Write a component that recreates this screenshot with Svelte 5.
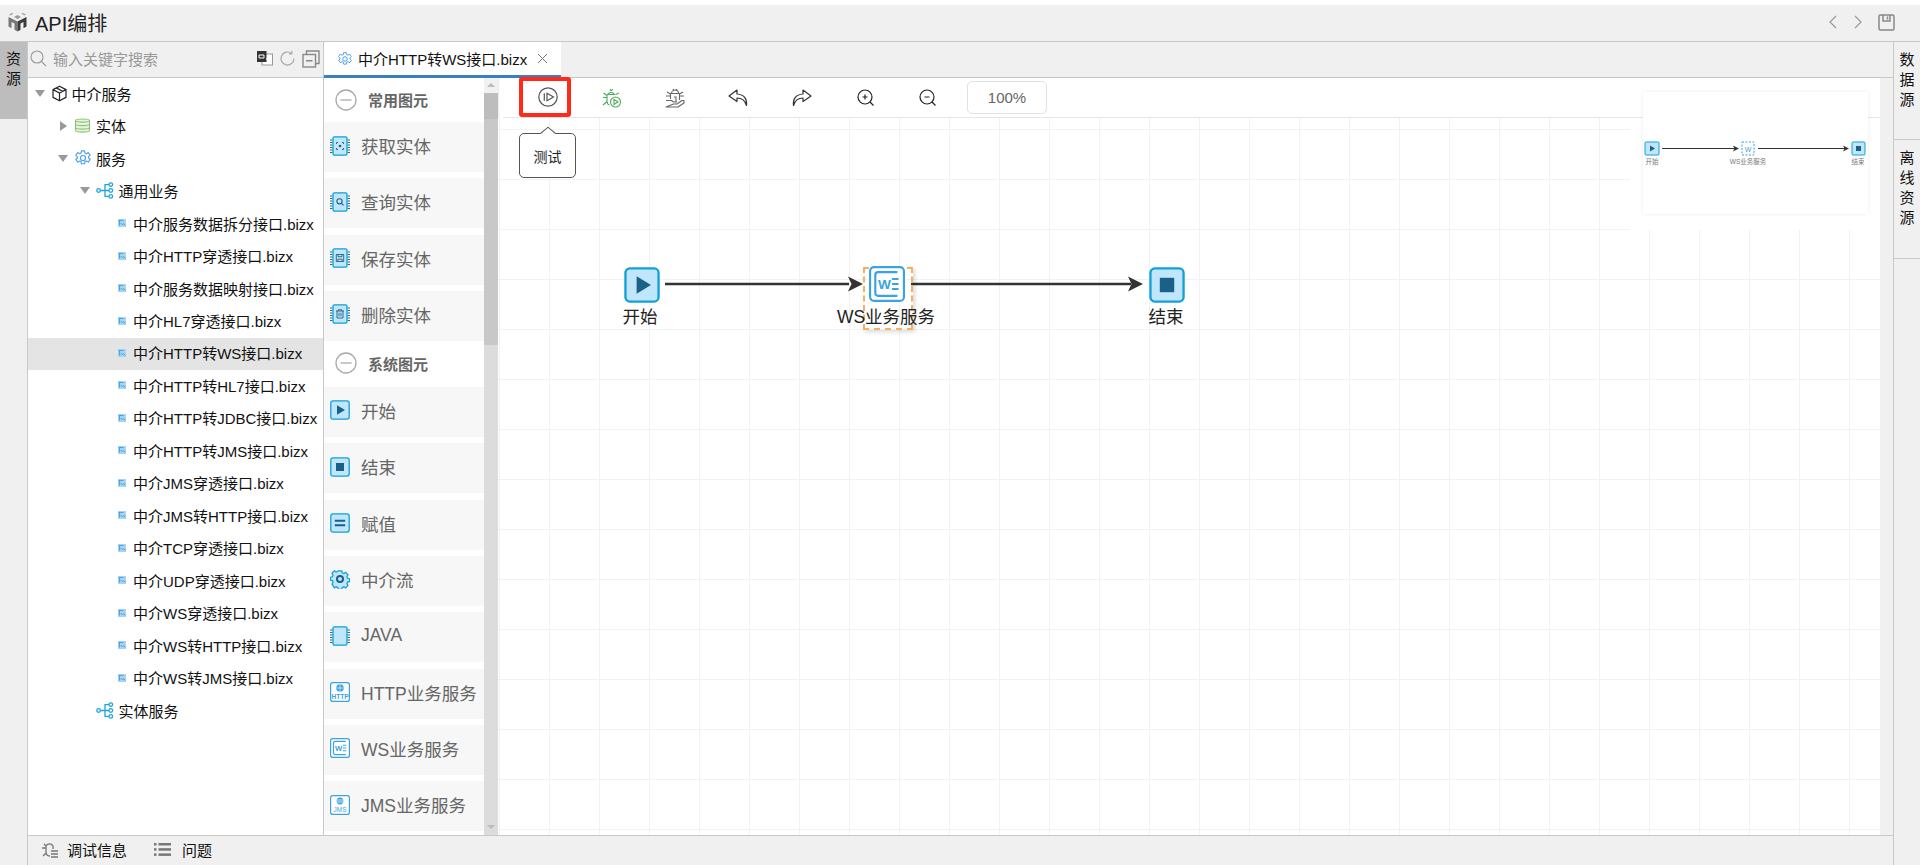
<script lang="ts">
  type Row = { label: string; level: number; icon?: string; open?: boolean; selected?: boolean };

  const leaves = [
    '中介服务数据拆分接口.bizx',
    '中介HTTP穿透接口.bizx',
    '中介服务数据映射接口.bizx',
    '中介HL7穿透接口.bizx',
    '中介HTTP转WS接口.bizx',
    '中介HTTP转HL7接口.bizx',
    '中介HTTP转JDBC接口.bizx',
    '中介HTTP转JMS接口.bizx',
    '中介JMS穿透接口.bizx',
    '中介JMS转HTTP接口.bizx',
    '中介TCP穿透接口.bizx',
    '中介UDP穿透接口.bizx',
    '中介WS穿透接口.bizx',
    '中介WS转HTTP接口.bizx',
    '中介WS转JMS接口.bizx'
  ];

  const rows: Row[] = [
    { label: '中介服务', level: 0, icon: 'box', open: true },
    { label: '实体', level: 1, icon: 'db', open: false },
    { label: '服务', level: 1, icon: 'gear', open: true },
    { label: '通用业务', level: 2, icon: 'flow', open: true },
    ...leaves.map((label, i) => ({ label, level: 3, icon: 'leaf', selected: i === 4 })),
    { label: '实体服务', level: 2, icon: 'flow' }
  ];

  const commonItems = [
    { label: '获取实体', icon: 'chip-get' },
    { label: '查询实体', icon: 'chip-query' },
    { label: '保存实体', icon: 'chip-save' },
    { label: '删除实体', icon: 'chip-del' }
  ];

  const systemItems = [
    { label: '开始', icon: 'start' },
    { label: '结束', icon: 'stop' },
    { label: '赋值', icon: 'assign' },
    { label: '中介流', icon: 'flowgear' },
    { label: 'JAVA', icon: 'chip' },
    { label: 'HTTP业务服务', icon: 'http' },
    { label: 'WS业务服务', icon: 'ws' },
    { label: 'JMS业务服务', icon: 'jms' }
  ];
</script>

{#snippet gearIcon(size, color)}
  <svg width={size} height={size} viewBox="0 0 24 24" fill="none" stroke={color} stroke-width="1.5" aria-hidden="true">
    <path d="M10 2.5h4l.6 2.9 1.7.8 2.6-1.4 2.6 3.4-2 2 .1 1.8 2 2-2.6 3.400-2.600-1.400-1.800.8-.6 2.900h-4l-.6-2.900-1.700-.8-2.600 1.400-2.600-3.400 2-2-.1-1.800-2-2 2.600-3.400 2.600 1.400 1.800-.8z" stroke-linejoin="round" />
    <circle cx="12" cy="12" r="3.4" />
  </svg>
{/snippet}

{#snippet treeIcon(kind)}
  {#if kind === 'box'}
    <svg width="17" height="17" viewBox="0 0 17 17" fill="none" stroke="#222" stroke-width="1.2" stroke-linejoin="round" aria-hidden="true">
      <path d="M8.5 1.2 15 4.6v7.8l-6.500 3.400L2 12.400V4.600zM2 4.600l6.500 3.400L15 4.600M8.500 8v7.800M5.200 2.900l6.500 3.400" />
    </svg>
  {:else if kind === 'db'}
    <svg width="17" height="17" viewBox="0 0 17 17" fill="#e6f3df" stroke="#8cc472" stroke-width="1.1" aria-hidden="true">
      <path d="M1.5 3.5C1.5 1.4 15.5 1.4 15.5 3.5v10c0 2.100-14 2.100-14 0z" />
      <path d="M1.5 3.5c0 2.100 14 2.100 14 0M1.500 7c0 2.100 14 2.100 14 0M1.500 10.500c0 2.100 14 2.100 14 0" fill="none" />
    </svg>
  {:else if kind === 'gear'}
    {@render gearIcon(18, '#4a9ff0')}
  {:else if kind === 'flow'}
    <svg width="18" height="17" viewBox="0 0 18 17" fill="none" stroke="#1ea5dc" stroke-width="1.3" aria-hidden="true">
      <circle cx="2.6" cy="8.5" r="1.8" />
      <circle cx="14.8" cy="2.6" r="1.8" />
      <circle cx="14.8" cy="8.5" r="1.8" />
      <circle cx="14.8" cy="14.4" r="1.8" />
      <path d="M4.4 8.5H13M13 2.6H9v11.800h4" />
    </svg>
  {:else}
    <svg width="8" height="8" viewBox="0 0 8 8" aria-hidden="true">
      <rect width="8" height="8" fill="#a6d4f2" />
      <path d="M.5 1.500h5M1.500 1.500v5M2.500 4l2 2 1-1.500 2 2" stroke="#4fa3dc" stroke-width="1" fill="none" />
    </svg>
  {/if}
{/snippet}

{#snippet tile(kind, size)}
  <svg width={size} height={size} viewBox="0 0 20 20" aria-hidden="true">
    {#if kind === 'flowgear'}
      <path d="M8 1h4l.5 2.300 1.700.7 2-1.200 2.700 2.800-1.200 2 .7 1.700 2.100.5v3.300l-2.100.5-.7 1.700 1.200 2-2.700 2.700-2-1.200-1.700.7-.5 2.100H8l-.5-2.100-1.700-.7-2 1.200L1.100 15.600l1.200-2-.7-1.700-2.100-.5V8.100l2.100-.5.7-1.700-1.200-2 2.700-2.800 2 1.200 1.700-.7z" transform="translate(1 .9) scale(.9)" fill="#bfe6fb" stroke="#12a0d8" stroke-width="1.400" />
      <circle cx="10" cy="10" r="3" fill="none" stroke="#1a6088" stroke-width="2" />
    {:else if kind === 'http' || kind === 'ws' || kind === 'jms'}
      <rect x=".6" y=".6" width="18.800" height="18.800" rx="2.200" fill="#fff" stroke="#3ca3e2" stroke-width="1.200" />
      {#if kind === 'ws'}
        <path d="M15.800 3.400H5a1.500 1.500 0 0 0-1.500 1.500v10.200A1.500 1.500 0 0 0 5 16.600h10.800" fill="none" stroke="#3ca3e2" stroke-width="1.200" />
        <text x="5" y="12.800" font-size="7.600" font-weight="700" fill="#3ca3e2" font-family="Liberation Sans, sans-serif">W</text>
        <path d="M12.800 7.200h3.600M12.800 10h3.600M12.800 12.800h3.600" stroke="#3ca3e2" stroke-width="1.100" />
      {:else if kind === 'http'}
        <circle cx="10" cy="6" r="3.800" fill="#3ca3e2" />
        <path d="M6.200 6h7.600M10 2.200v7.600" stroke="#fff" stroke-width=".6" />
        <text x="10" y="17.300" text-anchor="middle" font-size="6.600" font-weight="700" fill="#3ca3e2" font-family="Liberation Sans, sans-serif">HTTP</text>
      {:else}
        <circle cx="10" cy="6" r="3.400" fill="#3ca3e2" />
        <path d="M6.600 5h6.800M6.600 7h6.800" stroke="#fff" stroke-width=".7" />
        <text x="10" y="17" text-anchor="middle" font-size="6.400" fill="#3ca3e2" font-family="Liberation Sans, sans-serif">JMS</text>
      {/if}
    {:else if kind.startsWith('chip')}
      <path d="M0 4h2.500M0 6.500h2.500M0 9h2.500M0 11.500h2.500M0 14h2.500M0 16.500h2.500M17.500 4H20M17.500 6.500H20M17.500 9H20M17.500 11.500H20M17.500 14H20M17.500 16.500H20" stroke="#24708f" stroke-width="1.200" />
      <rect x="3" y=".8" width="14" height="18.400" rx="1.600" fill="#bfe6fb" stroke="#12a0d8" stroke-width="1.300" />
      {#if kind === 'chip-get'}
        <path d="M6.500 8V6.500H8M12 6.500h1.500V8M13.500 12v1.500H12M8 13.500H6.500V12" fill="none" stroke="#24607f" stroke-width=".9" />
        <circle cx="10" cy="10" r="1.300" fill="#24607f" />
      {:else if kind === 'chip-query'}
        <circle cx="9.500" cy="9.300" r="2.600" fill="none" stroke="#24607f" stroke-width="1.100" />
        <path d="m11.500 11.300 2 2" stroke="#24607f" stroke-width="1.200" />
      {:else if kind === 'chip-save'}
        <path d="M6.300 6.500h7.400v7H6.300zM8 6.500v2.200h4V6.500M7.800 13.500v-2.300h4.400v2.300" fill="none" stroke="#24607f" stroke-width=".9" />
      {:else if kind === 'chip-del'}
        <path d="M6 7h8M8.200 7V5.800h3.600V7M7 7v7h6V7M9 8.700v3.600M11 8.700v3.600" fill="none" stroke="#24607f" stroke-width=".9" />
      {/if}
    {:else}
      <rect x=".8" y=".8" width="18.400" height="18.400" rx="2.400" fill="#bfe6fb" stroke="#12a0d8" stroke-width="1.300" />
      {#if kind === 'start'}
        <path d="M7 5.200 15 10l-8 4.800z" fill="#1a6088" />
      {:else if kind === 'stop'}
        <rect x="6" y="6" width="8" height="8" fill="#1a6088" />
      {:else if kind === 'assign'}
        <path d="M4.800 7.700h10.400M4.800 12.300h10.400" stroke="#1a6088" stroke-width="2" />
      {/if}
    {/if}
  </svg>
{/snippet}

{#snippet collapseHead(label)}
  <div class="group-head">
    <svg width="22" height="22" viewBox="0 0 22 22" fill="none" stroke="#aaa" stroke-width="1.300" aria-hidden="true">
      <circle cx="11" cy="11" r="10" />
      <path d="M5.500 11h11" />
    </svg>
    <span>{label}</span>
  </div>
{/snippet}

{#snippet paletteItem(item)}
  <div class="palette-item">
    {@render tile(item.icon, 20)}
    <span>{item.label}</span>
  </div>
{/snippet}

<div class="page">
  <header class="titlebar">
    <svg class="logo" width="21" height="20" viewBox="0 0 21 20" aria-hidden="true">
      <path d="m10.500 9.500-9-4.500v9.500l3 1.700V10l3 1.600v6.100l3 1.800z" fill="#777" />
      <path d="m10.500 9.500 9-4.500v9.500l-3 1.700V10l-3 1.600v6.100l-3 1.800z" fill="#3c3c3c" />
      <path d="m10.500 3 3.500 2-3.500 2L7 5z" fill="#999" />
      <path d="M2 2.500 5 .8l1.500.9-3 1.700zM19 2.500 16 .8l-1.500.9 3 1.700z" fill="#aaa" />
    </svg>
    <h1>API编排</h1>
    <div class="titlebar-actions">
      <svg width="10" height="14" viewBox="0 0 10 14" fill="none" stroke="#999" stroke-width="1.200"><path d="M8 1 2 7l6 6" /></svg>
      <svg width="10" height="14" viewBox="0 0 10 14" fill="none" stroke="#999" stroke-width="1.200"><path d="m2 1 6 6-6 6" /></svg>
      <svg width="17" height="17" viewBox="0 0 17 17" fill="none" stroke="#888" stroke-width="1.500"><rect x="1" y="1" width="15" height="15" rx="1.500" /><path d="M5 1v6h7V1M9.500 2.500v3" /></svg>
    </div>
  </header>

  <div class="workspace">
    <nav class="left-rail">
      <div class="rail-tab active">资<br />源</div>
    </nav>

    <div class="center">
      <div class="panels">
        <aside class="sidebar">
          <div class="search">
            <svg width="17" height="17" viewBox="0 0 17 17" fill="none" stroke="#999" stroke-width="1.100"><circle cx="7" cy="7" r="6" /><path d="m11.500 11.500 4.500 4.500" /></svg>
            <span class="placeholder">输入关键字搜索</span>
            <div class="search-tools">
              <svg width="16" height="15" viewBox="0 0 16 15" aria-hidden="true">
                <rect x="5" y="3" width="10.500" height="11" fill="#fff" stroke="#999" />
                <rect width="9.500" height="11" fill="#333" />
                <path d="M2 4h5v3H2zM9 7l4 5" stroke="#fff" stroke-width="1" fill="none" />
              </svg>
              <svg width="17" height="17" viewBox="0 0 17 17" fill="none" stroke="#aaa" stroke-width="1.200"><path d="M15 8.500A6.500 6.500 0 1 1 12.500 3.400M12.800 .8v3h-3" /></svg>
              <svg width="18" height="18" viewBox="0 0 18 18" fill="none" stroke="#888" stroke-width="1.400"><rect x="1" y="4.500" width="12.500" height="12.500" /><path d="M4.500 4.500V1H17v12.500h-3.500M4 10.700h6.500" /></svg>
            </div>
          </div>
          <ul class="tree">
            {#each rows as row}
              <li class="tree-row" class:selected={row.selected} style="padding-left: {row.level === 3 ? 90 : 7 + row.level * 22.5}px">
                {#if row.open === true}
                  <i class="caret down"></i>
                {:else if row.open === false}
                  <i class="caret right"></i>
                {:else if row.level < 3}
                  <i class="caret none"></i>
                {/if}
                <span class="tree-icon" class:root={row.level === 0} class:small={row.level === 3}>{@render treeIcon(row.icon)}</span>
                <span class="tree-label">{row.label}</span>
              </li>
            {/each}
          </ul>
        </aside>

        <main class="editor">
          <div class="tabs">
            <div class="tab">
              {@render gearIcon(16, '#4a9ff0')}
              <span>中介HTTP转WS接口.bizx</span>
              <svg width="11" height="11" viewBox="0 0 11 11" stroke="#777" stroke-width="1"><path d="m1 1 9 9M10 1l-9 9" /></svg>
            </div>
          </div>

          <div class="editor-body">
            <div class="palette">
              <div class="palette-list">
                {@render collapseHead('常用图元')}
                {#each commonItems as item}
                  {@render paletteItem(item)}
                {/each}
                {@render collapseHead('系统图元')}
                {#each systemItems as item}
                  {@render paletteItem(item)}
                {/each}
              </div>
              <div class="scrollbar">
                <div class="scroll-thumb"></div>
              </div>
            </div>

            <div class="canvas-wrap">
              <div class="toolbar">
                <span class="tool-btn first">
                  <svg width="20" height="20" viewBox="0 0 20 20" fill="none" stroke="#555" stroke-width="1.200"><circle cx="10" cy="10" r="9.200" /><path d="M9 6.200v7.600L15.500 10zM6.300 6.200v7.600" /></svg>
                </span>
                <span class="tool-btn">
                  <svg width="20" height="20" viewBox="0 0 20 20" fill="none" stroke="#4caa5c" stroke-width="1.100">
                    <path d="M5.500 6.500a4 4 0 0 1 7 0M5 6.500h8.500M5 6.500v7c0 1.500.8 3 2.500 3.800M8 1l1 2M10.500 1l-1 2M5 9.500H1M1.500 5l3.500 2.500M1 17l4-3.500M14 6.500 17 5" />
                    <circle cx="13.500" cy="14" r="5" fill="#fff" /><path d="M12 11.500v5l4-2.500z" />
                  </svg>
                </span>
                <span class="tool-btn grey-bug">
                  <svg width="20" height="20" viewBox="0 0 20 20" fill="none" stroke="#666" stroke-width="1.100">
                    <path d="M6.500 5.500a3.500 3.500 0 0 1 7 0M5.500 5.500h9V12M5.500 5.500V11M8 1l1 2M12 1l-1 2M5.500 8H1M14.500 8H19M2 4l3.500 2M18 4l-3.500 2" />
                    <path d="M1 12.500h5.500l2 1.500h3.500M8.500 16H12l5-3.500h2V15l-6 4H1z" fill="#fff" stroke-linejoin="round" />
                    <path d="M9 9h2v5" />
                  </svg>
                </span>
                <span class="tool-btn pushed">
                  <svg width="21" height="18" viewBox="0 0 21 18" fill="none" stroke="#333" stroke-width="1.200" stroke-linejoin="round"><path d="M9 1 1 7l8 5.500V9c5 0 8 2 9.500 7.500.8-6-2-11-9.500-11.500z" /></svg>
                </span>
                <span class="tool-btn">
                  <svg width="21" height="18" viewBox="0 0 21 18" fill="none" stroke="#333" stroke-width="1.200" stroke-linejoin="round"><path d="M12 1l8 6-8 5.500V9c-5 0-8 2-9.500 7.500C1.700 10.500 4.500 5.500 12 5z" /></svg>
                </span>
                <span class="tool-btn pushed">
                  <svg width="18" height="18" viewBox="0 0 18 18" fill="none" stroke="#222" stroke-width="1.200"><circle cx="8" cy="8" r="7" /><path d="M5.500 8h5M8 5.500v5M13 13l3.500 3.500" /></svg>
                </span>
                <span class="tool-btn">
                  <svg width="18" height="18" viewBox="0 0 18 18" fill="none" stroke="#222" stroke-width="1.200"><circle cx="8" cy="8" r="7" /><path d="M5.500 8h5M13 13l3.500 3.500" /></svg>
                </span>
                <span class="zoom-value">100%</span>
              </div>

              <div class="canvas">
                <svg class="wires" width="100%" height="100%" aria-hidden="true">
                  <path d="M167 166H351" stroke="#333" stroke-width="2.500" />
                  <path d="m365 166-15-7.500 3.500 7.500-3.500 7.500z" fill="#333" />
                  <path d="M413 166H633" stroke="#333" stroke-width="2.500" />
                  <path d="m645 166-15-7.500 3.500 7.500-3.500 7.500z" fill="#333" />
                </svg>

                <div class="node" style="left: 126px; top: 149px">{@render tile('start', 36)}</div>
                <div class="node-label" style="left: 142px; top: 188px">开始</div>

                <div class="selection"></div>
                <div class="node" style="left: 371px; top: 148px">{@render tile('ws', 36)}</div>
                <div class="node-label" style="left: 388px; top: 188px">WS业务服务</div>

                <div class="node" style="left: 651px; top: 149px">{@render tile('stop', 36)}</div>
                <div class="node-label" style="left: 668px; top: 188px">结束</div>

                <div class="minimap-mask"></div>
                <div class="minimap">
                  <svg width="225" height="122" viewBox="0 0 225 122" aria-hidden="true">
                    <rect x="2" y="50" width="14" height="13" rx="1" fill="#bfe6fb" stroke="#12a0d8" />
                    <path d="M7 53.500 12 56.500 7 59.500z" fill="#1a6088" />
                    <path d="M19 56.500h73M115 56.500h88" stroke="#333" stroke-width="1" />
                    <path d="m96 56.500-6-3 1.500 3-1.500 3zM206 56.500l-6-3 1.500 3-1.500 3z" fill="#333" />
                    <rect x="99" y="50" width="12" height="13" fill="#fff" stroke="#3ca3e2" stroke-dasharray="2 1.500" />
                    <text x="105" y="60" text-anchor="middle" font-size="7" fill="#3ca3e2" font-family="Liberation Sans, sans-serif">W</text>
                    <rect x="209" y="50" width="13" height="13" rx="1" fill="#bfe6fb" stroke="#12a0d8" />
                    <rect x="213" y="54" width="5" height="5" fill="#1a6088" />
                    <g font-size="6.500" fill="#777" text-anchor="middle" font-family="Liberation Sans, Noto Sans CJK SC, sans-serif">
                      <text x="9" y="72">开始</text>
                      <text x="105" y="72">WS业务服务</text>
                      <text x="215" y="72">结束</text>
                    </g>
                  </svg>
                </div>

                <div class="tooltip">测试</div>
              </div>
            </div>
          </div>
        </main>
      </div>

      <footer class="statusbar">
        <span class="status-item">
          <svg width="18" height="16" viewBox="0 0 18 16" fill="none" stroke="#777" stroke-width="1.300"><path d="M5 4a4 4 0 0 1 7 0v3M5 4v6c0 2 1 4 4 4M5 6H1M3 2l2 2M5 11l-3 3M10 9h7M10 12h7M10 15h7" /></svg>
          调试信息
        </span>
        <span class="status-item second">
          <svg width="17" height="13" viewBox="0 0 17 13" fill="#777"><rect width="2.500" height="2.500" /><rect x="4.500" width="12.500" height="2.500" /><rect y="5.200" width="2.500" height="2.500" /><rect x="4.500" y="5.200" width="12.500" height="2.500" /><rect y="10.400" width="2.500" height="2.500" /><rect x="4.500" y="10.400" width="12.500" height="2.500" /></svg>
          问题
        </span>
      </footer>
    </div>

    <nav class="right-rail">
      <div class="rail-tab side">数<br />据<br />源</div>
      <div class="rail-tab side">离<br />线<br />资<br />源</div>
    </nav>
  </div>
</div>

<style>
  :global(body) {
    margin: 0;
    background: #fff;
    font-family: "Liberation Sans", "Noto Sans CJK SC", sans-serif;
    color: #111;
  }

  .page {
    display: flex;
    flex-direction: column;
    height: 865px;
    padding-top: 5px;
    box-sizing: border-box;
    overflow: hidden;
  }

  .titlebar {
    display: flex;
    flex-shrink: 0;
    align-items: center;
    height: 37px;
    padding: 0 25px 2px 7px;
    box-sizing: border-box;
    border-bottom: 1px solid #c8c8c8;
    background: #f0f0f0;
  }

  .logo {
    margin-right: 7px;
  }

  h1 {
    margin: 0;
    font-size: 20px;
    font-weight: 400;
    color: #222;
  }

  .titlebar-actions {
    display: flex;
    align-items: center;
    gap: 15px;
    margin-left: auto;
  }

  .workspace {
    display: flex;
    flex: 1;
    min-height: 0;
  }

  .left-rail {
    flex-shrink: 0;
    width: 27px;
    border-right: 1px solid #c8c8c8;
    background: #f0f0f0;
  }

  .rail-tab {
    font-size: 15px;
    line-height: 20px;
    text-align: center;
  }

  .rail-tab.active {
    height: 77px;
    padding-top: 7px;
    box-sizing: border-box;
    background: #bdbdbd;
  }

  .center {
    display: flex;
    flex: 1;
    flex-direction: column;
    min-width: 0;
  }

  .panels {
    display: flex;
    flex: 1;
    min-height: 0;
  }

  .sidebar {
    flex-shrink: 0;
    width: 295px;
    border-right: 1px solid #c8c8c8;
    background: #fff;
  }

  .search {
    display: flex;
    align-items: center;
    height: 36px;
    padding: 0 3px 2px 2px;
    box-sizing: border-box;
    border-bottom: 1px solid #c8c8c8;
    background: #f0f0f0;
  }

  .placeholder {
    margin-left: 6px;
    color: #999;
    font-size: 15px;
  }

  .search-tools {
    display: flex;
    align-items: center;
    gap: 6px;
    margin-left: auto;
  }

  .tree {
    margin: 0;
    padding: 0;
    list-style: none;
  }

  .tree-row {
    display: flex;
    align-items: center;
    height: 32.47px;
    padding-bottom: 2px;
    box-sizing: border-box;
    font-size: 15px;
    white-space: nowrap;
  }

  .tree-row.selected {
    background: #e4e4e4;
  }

  .caret {
    flex-shrink: 0;
    width: 10px;
    height: 10px;
    margin-right: 6px;
  }

  .caret.down {
    height: 0;
    border-top: 7px solid #999;
    border-right: 5px solid transparent;
    border-left: 5px solid transparent;
    box-sizing: border-box;
  }

  .caret.right {
    width: 0;
    height: 0;
    margin-left: 2px;
    margin-right: 7px;
    border-top: 5px solid transparent;
    border-bottom: 5px solid transparent;
    border-left: 7px solid #999;
  }

  .tree-icon {
    display: inline-flex;
    flex-shrink: 0;
    width: 22.5px;
  }

  .tree-icon.root {
    width: 20.5px;
  }

  .tree-icon.small {
    width: 15px;
  }

  .editor {
    display: flex;
    flex: 1;
    flex-direction: column;
    min-width: 0;
  }

  .tabs {
    flex-shrink: 0;
    height: 36px;
    box-sizing: border-box;
    border-bottom: 1px solid #c8c8c8;
    background: #f0f0f0;
  }

  .tab {
    display: flex;
    align-items: center;
    gap: 5px;
    width: 237px;
    height: 36px;
    padding-left: 13px;
    box-sizing: border-box;
    border-bottom: 3px solid #3a7fc4;
    background: #fff;
    font-size: 15px;
  }

  .tab svg:last-child {
    margin-left: 5px;
  }

  .editor-body {
    display: flex;
    flex: 1;
    min-height: 0;
    padding-right: 13px;
    background: #f0f0f0;
  }

  .palette {
    display: flex;
    flex-shrink: 0;
    width: 174px;
    background: #fff;
  }

  .palette-list {
    flex: 1;
    overflow: hidden;
  }

  .group-head {
    display: flex;
    align-items: center;
    gap: 11px;
    height: 44px;
    padding: 0 0 1px 11px;
    box-sizing: border-box;
    color: #666;
    font-size: 15px;
    font-weight: 700;
  }

  .palette-item + .group-head {
    height: 46px;
    margin-top: -6.33px;
  }

  .palette-item {
    display: flex;
    align-items: center;
    gap: 11px;
    height: 50px;
    margin-bottom: 6.33px;
    padding: 0 0 3px 6px;
    box-sizing: border-box;
    background: #f7f7f7;
    color: #666;
    font-size: 17.5px;
    white-space: nowrap;
  }

  .scrollbar {
    position: relative;
    flex-shrink: 0;
    width: 14px;
    padding-top: 15px;
    box-sizing: border-box;
    background: linear-gradient(#f1f1f1 15px, #dcdcdc 15px);
  }

  .scrollbar::before,
  .scrollbar::after {
    content: "";
    position: absolute;
    left: 3px;
    border-right: 4px solid transparent;
    border-left: 4px solid transparent;
  }

  .scrollbar::before {
    top: 5px;
    border-bottom: 4px solid #bbb;
  }

  .scrollbar::after {
    bottom: 6px;
    border-top: 4px solid #bbb;
  }

  .scroll-thumb {
    height: 252px;
    background: linear-gradient(#bdbdbd 26px, #c8c8c8 26px);
  }

  .canvas-wrap {
    display: flex;
    flex: 1;
    flex-direction: column;
    min-width: 0;
    background: #fff;
    box-shadow: inset 2px 0 2px -1px #e8e8e8;
  }

  .toolbar {
    display: flex;
    flex-shrink: 0;
    align-items: center;
    height: 40px;
    margin-left: 5px;
    padding-left: 33px;
    box-sizing: border-box;
    border-bottom: 1px solid #e6e6e6;
  }

  .tool-btn {
    display: inline-flex;
    justify-content: center;
    align-items: center;
    width: 63.5px;
    height: 40px;
    margin-left: -1px;
  }

  .tool-btn.pushed {
    margin-left: 1px;
  }

  .tool-btn.grey-bug {
    padding-left: 2px;
    box-sizing: border-box;
  }

  .tool-btn.first {
    width: 52px;
    height: 40px;
    margin: -1px 10px 0 -17px;
    padding-left: 5px;
    box-sizing: border-box;
    border: 4px solid #ff2a1a;
    border-radius: 3px;
  }

  .zoom-value {
    display: flex;
    justify-content: center;
    align-items: center;
    width: 80px;
    height: 33px;
    margin-left: 7px;
    box-sizing: border-box;
    border: 1px solid #dfe0e8;
    border-radius: 5px;
    color: #666;
    font-size: 15px;
  }

  .canvas {
    position: relative;
    flex: 1;
    background-color: #fff;
    background-image:
      linear-gradient(#f2f2f5 1px, transparent 1px),
      linear-gradient(90deg, #f2f2f5 1px, transparent 1px);
    background-position: 51px 11px;
    background-size: 50px 50px;
  }

  .wires {
    position: absolute;
    inset: 0;
  }

  .node {
    position: absolute;
    width: 36px;
    height: 36px;
  }

  .node-label {
    position: absolute;
    font-size: 17.5px;
    line-height: 22px;
    white-space: nowrap;
    transform: translateX(-50%);
    color: #222;
  }

  .selection {
    position: absolute;
    left: 365px;
    top: 149px;
    width: 50px;
    height: 63px;
    box-sizing: border-box;
    border: 2px dashed #f8b060;
    box-shadow: 2px 2px 4px rgb(0 0 0 / 15%);
  }

  .minimap-mask {
    position: absolute;
    right: 0;
    top: 0;
    width: 250px;
    height: 112px;
    background: #fff;
  }

  .minimap {
    position: absolute;
    right: 12px;
    top: -26px;
    width: 225px;
    height: 122px;
    background: #fff;
    box-shadow: 0 0 4px rgb(0 0 0 / 8%);
  }

  .tooltip {
    position: absolute;
    left: 21px;
    top: 15px;
    display: flex;
    justify-content: center;
    align-items: center;
    width: 57px;
    height: 45px;
    box-sizing: border-box;
    border: 1px solid #555;
    border-radius: 5px;
    background: #fff;
    font-size: 14px;
    color: #222;
  }

  .tooltip::before {
    content: "";
    position: absolute;
    left: 23px;
    top: -6px;
    width: 9px;
    height: 9px;
    border-top: 1px solid #555;
    border-right: 1px solid #555;
    background: #fff;
    transform: rotate(-45deg) skew(6deg, 6deg);
  }

  .statusbar {
    display: flex;
    flex-shrink: 0;
    align-items: center;
    height: 30px;
    padding: 0 0 2px 13px;
    box-sizing: border-box;
    border-top: 1px solid #c8c8c8;
    background: #f0f0f0;
    font-size: 15px;
  }

  .status-item {
    display: inline-flex;
    align-items: center;
    gap: 8px;
  }

  .status-item.second {
    gap: 11px;
    margin-left: 27px;
  }

  .right-rail {
    flex-shrink: 0;
    width: 27px;
    box-sizing: border-box;
    border-left: 1px solid #c8c8c8;
    background: #f0f0f0;
  }

  .rail-tab.side {
    padding-top: 8px;
    box-sizing: border-box;
    border-bottom: 1px solid #c8c8c8;
  }

  .rail-tab.side:first-child {
    height: 98px;
  }

  .rail-tab.side:last-child {
    height: 119px;
  }
</style>
